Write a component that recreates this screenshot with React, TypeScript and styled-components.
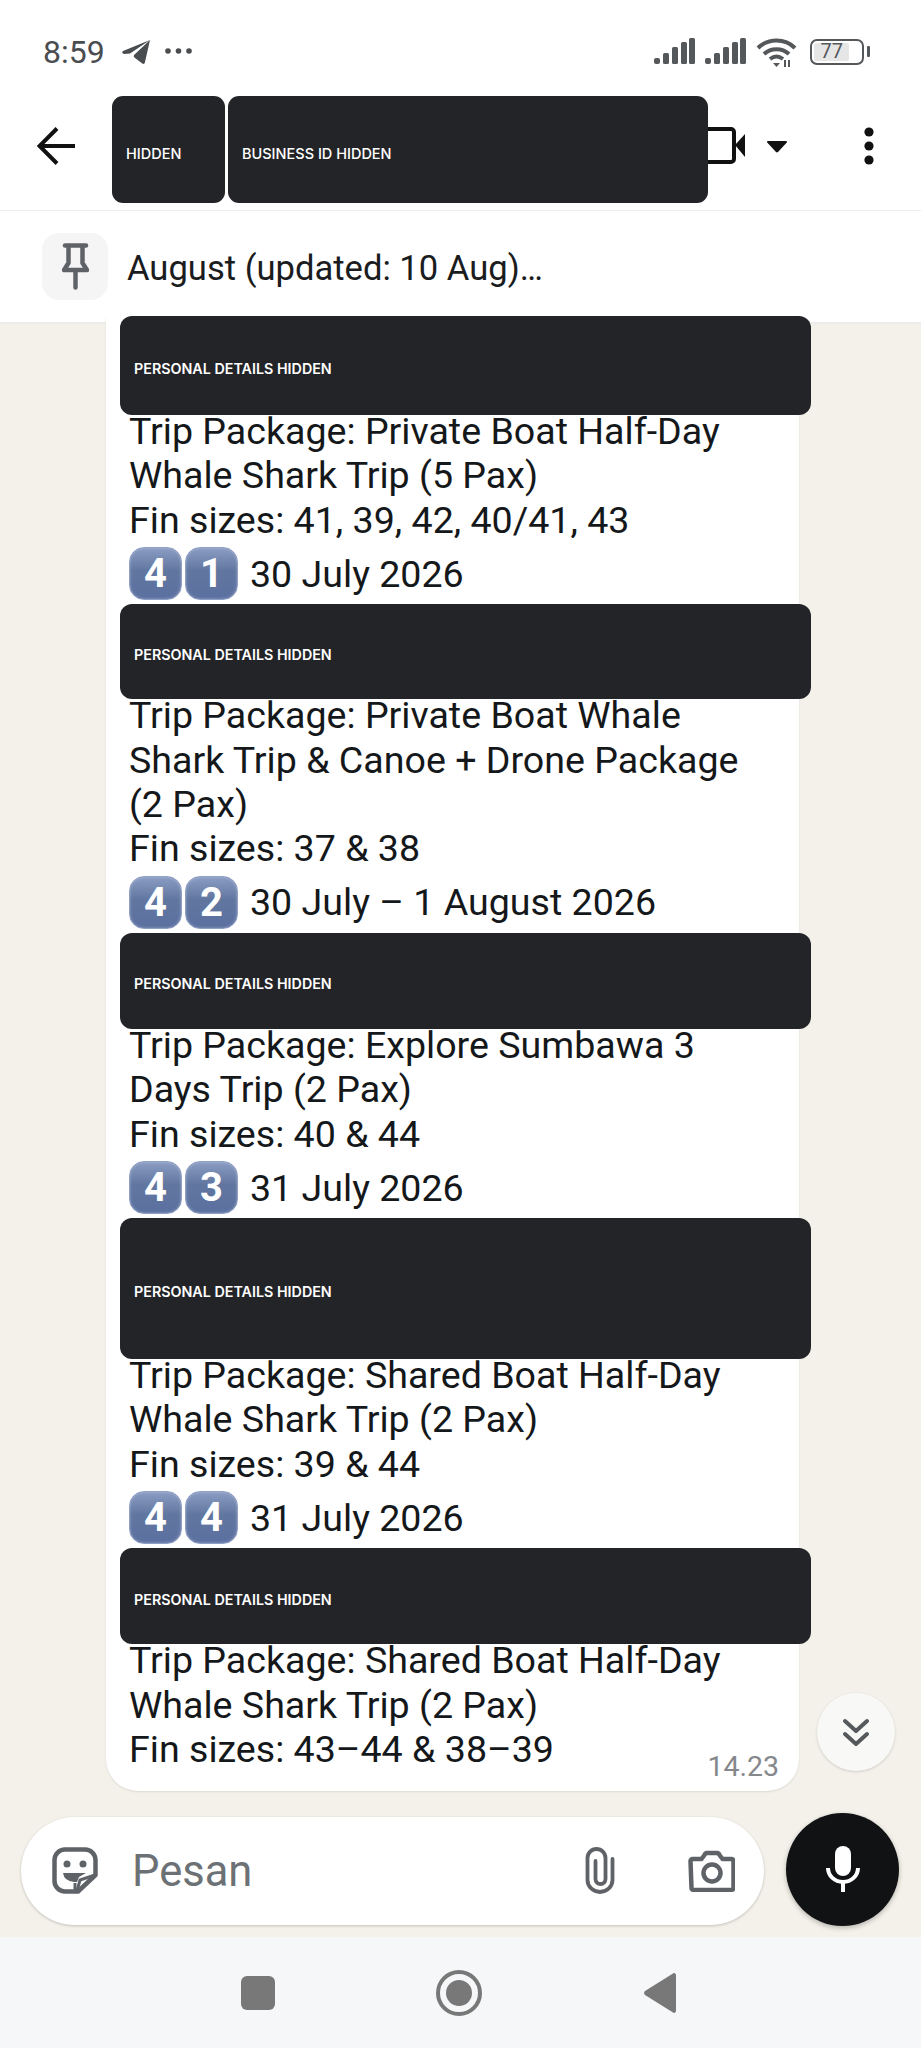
import React from "react";
import styled, { createGlobalStyle } from "styled-components";

const GlobalStyle = createGlobalStyle`
	html, body {
		margin: 0;
		padding: 0;
		background: #fff;
		font-family: Roboto, "Liberation Sans", sans-serif;
	}
	* {
		box-sizing: border-box;
	}
`;

const Phone = styled.div`
	width: 921px;
	height: 2048px;
	display: flex;
	flex-direction: column;
	overflow: hidden;
	background: #fff;
`;

const StatusBar = styled.div`
	height: 96px;
	flex: none;
	display: flex;
	align-items: flex-start;
	padding: 38px 57px 0 43px;
`;

const Clock = styled.span`
	font-size: 32px;
	line-height: 29px;
	color: #4a4d50;
`;

const StatusLeft = styled.div`
	display: flex;
	align-items: flex-start;
	gap: 15px;
	margin-right: auto;
`;

const StatusRight = styled.div`
	display: flex;
	align-items: flex-start;
	gap: 10px;
`;

const Battery = styled.div`
	width: 54px;
	height: 26px;
	margin-top: 1px;
	margin-left: 2px;
	border: 2.5px solid #55585b;
	border-radius: 7px;
	padding: 2px;
	position: relative;
	display: flex;
`;

const BatteryFill = styled.div`
	width: 77%;
	background: #e6e6e6;
	border-radius: 2px;
	color: #55585b;
	font-size: 20px;
	line-height: 17px;
	text-align: center;
`;

const BatteryNub = styled.div`
	position: absolute;
	right: -8px;
	top: 5px;
	width: 3px;
	height: 11px;
	background: #55585b;
	border-radius: 1px;
`;

const Header = styled.header`
	height: 115px;
	flex: none;
	display: flex;
	align-items: flex-start;
	padding-left: 37px;
	border-bottom: 1px solid #ededed;
`;

const HeaderIcon = styled.div<{ $left?: number; $top: number }>`
	margin-left: ${(p) => p.$left ?? 0}px;
	margin-top: ${(p) => p.$top}px;
	line-height: 0;
`;

const HiddenBox = styled.div<{ $width: number; $left: number }>`
	width: ${(p) => p.$width}px;
	height: 107px;
	margin-left: ${(p) => p.$left}px;
	padding: 7px 0 0 14px;
	display: flex;
	align-items: center;
	background: #232428;
	border-radius: 11px;
	color: #fff;
	font-family: Inter, sans-serif;
	font-size: 14.5px;
	font-weight: 500;
`;

const PinBar = styled.div`
	height: 113px;
	flex: none;
	display: flex;
	align-items: center;
	padding-left: 42px;
	border-bottom: 2px solid #ececea;
`;

const PinTile = styled.div`
	width: 66px;
	height: 67px;
	border-radius: 17px;
	background: #f5f5f5;
	display: flex;
	align-items: center;
	justify-content: center;
`;

const PinText = styled.span`
	margin-left: 19px;
	padding-top: 2px;
	font-size: 34.6px;
	color: #1a1c1e;
`;

const Main = styled.main`
	flex: 1;
	min-height: 0;
	position: relative;
	display: flex;
	flex-direction: column;
	background: #f4f1ea;
`;

const Bubble = styled.section`
	width: 693px;
	margin: -8px 0 0 106px;
	padding-bottom: 19px;
	background: #fff;
	border-radius: 0 0 32px 32px;
	box-shadow: 0 1px 2px rgba(0, 0, 0, 0.1);
	position: relative;
	z-index: 1;
`;

const DetailsBox = styled.div<{ $height: number }>`
	width: 691px;
	height: ${(p) => p.$height}px;
	margin-left: 14px;
	padding: 6px 0 0 14px;
	display: flex;
	align-items: center;
	position: relative;
	z-index: 1;
	background: #232428;
	border-radius: 12px;
	color: #fff;
	font-family: Inter, sans-serif;
	font-size: 14.3px;
	font-weight: 600;
`;

const Lines = styled.div`
	margin-top: -6px;
	padding-left: 23px;
	font-size: 37.6px;
	line-height: 44.4px;
	color: #15181a;
`;

const DateRow = styled.div`
	height: 62px;
	padding-top: 1px;
	display: flex;
	align-items: center;
	padding-left: 23px;
	font-size: 37.6px;
	color: #15181a;
`;

const Keycap = styled.span`
	width: 53px;
	height: 53px;
	margin-right: 3px;
	display: flex;
	align-items: center;
	justify-content: center;
	border-radius: 15px;
	border: 1px solid #8fa0c6;
	background: linear-gradient(180deg, #8a9cc3 0%, #61769f 45%, #5b70a0 100%);
	box-shadow: inset 0 0 3px rgba(255, 255, 255, 0.35);
	color: #fff;
	font-size: 40px;
	font-weight: 700;
`;

const DateText = styled.span`
	margin-left: 9px;
`;

const Stamp = styled.span`
	position: absolute;
	right: 20px;
	bottom: 8px;
	font-size: 28.5px;
	color: #85888b;
`;

const ScrollButton = styled.div`
	position: absolute;
	left: 817px;
	top: 1369px;
	width: 78px;
	height: 78px;
	border-radius: 50%;
	background: #f8f8f7;
	box-shadow: 0 1px 3px rgba(0, 0, 0, 0.15);
	display: flex;
	align-items: center;
	justify-content: center;
`;

const Composer = styled.div`
	display: flex;
	align-items: flex-start;
	margin-top: 22px;
	padding-left: 21px;
`;

const InputPill = styled.div`
	width: 743px;
	height: 108px;
	margin-top: 4px;
	padding: 0 29px 0 31px;
	display: flex;
	align-items: center;
	background: #fff;
	border-radius: 54px;
	box-shadow: 0 1px 3px rgba(0, 0, 0, 0.2);
`;

const Placeholder = styled.span`
	margin-left: 34px;
	margin-right: auto;
	padding-top: 2px;
	font-size: 43.5px;
	color: #6c7175;
`;

const MicButton = styled.div`
	width: 113px;
	height: 113px;
	margin-left: 22px;
	border-radius: 50%;
	background: #111214;
	box-shadow: 0 2px 5px rgba(0, 0, 0, 0.25);
	display: flex;
	align-items: center;
	justify-content: center;
`;

const NavBar = styled.nav`
	height: 111px;
	flex: none;
	padding-left: 241px;
	display: flex;
	align-items: center;
	background: #f6f7f8;
`;

const NavSquare = styled.div`
	width: 34px;
	height: 34px;
	border-radius: 6px;
	background: #787878;
`;

const NavHome = styled.div`
	width: 46px;
	height: 46px;
	margin-left: 161px;
	border: 4px solid #787878;
	border-radius: 50%;
	display: flex;
	align-items: center;
	justify-content: center;

	&::after {
		content: "";
		width: 26px;
		height: 26px;
		border-radius: 50%;
		background: #787878;
	}
`;

const NavBack = styled.div`
	margin-left: 162px;
	line-height: 0;
`;

const SignalIcon = () => (
	<svg width="41" height="26" viewBox="0 0 41 26" fill="#55585b">
		<rect x="0" y="20" width="6" height="6" rx="2" />
		<rect x="9" y="15" width="6" height="11" rx="1.5" />
		<rect x="18" y="9" width="6" height="17" rx="1.5" />
		<rect x="27" y="4" width="6" height="22" rx="1.5" />
		<rect x="35" y="0" width="6" height="26" rx="1.5" />
	</svg>
);

const messages = [
	{
		height: 99,
		lines: ["Trip Package: Private Boat Half-Day", "Whale Shark Trip (5 Pax)", "Fin sizes: 41, 39, 42, 40/41, 43"],
		caps: "41",
		date: "30 July 2026",
	},
	{
		height: 95,
		lines: ["Trip Package: Private Boat Whale", "Shark Trip & Canoe + Drone Package", "(2 Pax)", "Fin sizes: 37 & 38"],
		caps: "42",
		date: "30 July – 1 August 2026",
	},
	{
		height: 96,
		lines: ["Trip Package: Explore Sumbawa 3", "Days Trip (2 Pax)", "Fin sizes: 40 & 44"],
		caps: "43",
		date: "31 July 2026",
	},
	{
		height: 141,
		lines: ["Trip Package: Shared Boat Half-Day", "Whale Shark Trip (2 Pax)", "Fin sizes: 39 & 44"],
		caps: "44",
		date: "31 July 2026",
	},
	{
		height: 96,
		lines: ["Trip Package: Shared Boat Half-Day", "Whale Shark Trip (2 Pax)", "Fin sizes: 43–44 & 38–39"],
	},
];

const App: React.FC = () => {
	return (
		<Phone>
			<GlobalStyle />
			<StatusBar>
				<StatusLeft>
					<Clock>8:59</Clock>
					<svg width="28" height="24" viewBox="0 0 28 24" fill="#4a4d50" style={{ marginTop: 2, marginLeft: 2 }}>
						<path d="M28 0 1 11Q-1 13 2 14L8 13.500z" />
						<path d="M28 0 12 15Q11 17 13 18L21 24Q23 24 23 22z" />
					</svg>
					<svg width="27" height="6" viewBox="0 0 27 6" fill="#4a4d50" style={{ marginTop: 10 }}>
						<circle cx="3" cy="3" r="2.800" />
						<circle cx="13.500" cy="3" r="2.800" />
						<circle cx="24" cy="3" r="2.800" />
					</svg>
				</StatusLeft>
				<StatusRight>
					<SignalIcon />
					<SignalIcon />
					<svg width="42" height="30" viewBox="0 0 42 30" fill="none" stroke="#55585b" strokeWidth="4">
						<path d="M2 10C12 0 29 0 39 10" />
						<path d="M8 16c7-6.500 18-6.500 25 0" />
						<path d="M14 21c4-3 9-3 13 0" />
						<path d="M17 25h7l-3.500 4z" fill="#55585b" stroke="none" />
						<path d="M29 29v-7M33 22v7" strokeWidth="2" />
					</svg>
					<Battery>
						<BatteryFill>77</BatteryFill>
						<BatteryNub />
					</Battery>
				</StatusRight>
			</StatusBar>

			<Header>
				<HeaderIcon $top={31}>
					<svg width="38" height="38" viewBox="0 0 38 38" fill="none" stroke="#111" strokeWidth="4">
						<path d="M38 19H3M20 1.500 2.500 19 20 36.500" />
					</svg>
				</HeaderIcon>
				<HiddenBox $width={113} $left={37}>HIDDEN</HiddenBox>
				<HiddenBox $width={480} $left={3}>BUSINESS ID HIDDEN</HiddenBox>
				<HeaderIcon $top={31}>
					<svg width="37" height="37" viewBox="0 0 37 37">
						<path d="M0 2h23a3 3 0 0 1 3 3v27a3 3 0 0 1-3 3H0" fill="none" stroke="#111" strokeWidth="4" />
						<path d="M27 18 37 7v23z" fill="#111" />
					</svg>
				</HeaderIcon>
				<HeaderIcon $left={22} $top={45}>
					<svg width="20" height="12" viewBox="0 0 20 12" fill="#111">
						<path d="M1 0h18a1 1 0 0 1 .8 1.600L11 11a1.500 1.500 0 0 1-2 0L.2 1.600A1 1 0 0 1 1 0z" />
					</svg>
				</HeaderIcon>
				<HeaderIcon $left={77} $top={31}>
					<svg width="10" height="38" viewBox="0 0 10 38" fill="#111">
						<circle cx="5" cy="5" r="4.600" />
						<circle cx="5" cy="19" r="4.600" />
						<circle cx="5" cy="33" r="4.600" />
					</svg>
				</HeaderIcon>
			</Header>

			<PinBar>
				<PinTile>
					<svg width="27" height="47" viewBox="0 0 27 47" fill="none" stroke="#5f6368" strokeWidth="4.500" strokeLinecap="round" strokeLinejoin="round">
						<path d="M3 2.500h21" />
						<path d="M6.500 3v17l-4.500 7h23l-4.500-7V3" />
						<path d="M13.500 28v16.500" />
					</svg>
				</PinTile>
				<PinText>August (updated: 10 Aug)…</PinText>
			</PinBar>

			<Main>
				<Bubble>
					{messages.map((message) => (
						<React.Fragment key={message.lines[0] + message.height}>
							<DetailsBox $height={message.height}>PERSONAL DETAILS HIDDEN</DetailsBox>
							<Lines>
								{message.lines.map((line) => (
									<div key={line}>{line}</div>
								))}
							</Lines>
							{message.caps && (
								<DateRow>
									{message.caps.split("").map((digit, i) => (
										<Keycap key={i}>{digit}</Keycap>
									))}
									<DateText>{message.date}</DateText>
								</DateRow>
							)}
						</React.Fragment>
					))}
					<Stamp>14.23</Stamp>
				</Bubble>

				<ScrollButton>
					<svg width="26" height="29" viewBox="0 0 26 29" fill="none" stroke="#55595c" strokeWidth="4" strokeLinecap="round" strokeLinejoin="round">
						<path d="M2 3l11 10L24 3" />
						<path d="M2 16l11 10 11-10" />
					</svg>
				</ScrollButton>

				<Composer>
					<InputPill>
						<svg width="46" height="47" viewBox="0 0 46 47" fill="none" stroke="#5f6368" strokeWidth="4.500" strokeLinejoin="round">
							<path d="M13 2.500h20A10.500 10.500 0 0 1 43.500 13v15L26 44.500H13A10.500 10.500 0 0 1 2.500 34V13A10.500 10.500 0 0 1 13 2.500z" />
							<path d="M43 28 28 33 25 44" strokeWidth="3" />
							<path d="M11 26h23l-7 4-2 5h-3q-10-1-11-9z" fill="#5f6368" stroke="none" />
							<path d="M23 36v8" strokeWidth="3" />
							<circle cx="15" cy="17" r="3.500" fill="#5f6368" stroke="none" />
							<circle cx="31" cy="17" r="3.500" fill="#5f6368" stroke="none" />
						</svg>
						<Placeholder>Pesan</Placeholder>
						<svg width="31" height="47" viewBox="0 0 31 47" fill="none" stroke="#5f6368" strokeWidth="3.800" strokeLinecap="round">
							<path d="M11.500 14v18a5 5 0 0 0 10 0V11a9 9 0 0 0-18 0v22a12.500 12 0 0 0 25 0V12" />
						</svg>
						<svg width="47" height="42" viewBox="0 0 47 42" fill="none" stroke="#5f6368" strokeWidth="4.500" strokeLinejoin="round" style={{ marginLeft: 73 }}>
							<path d="M2.500 11a2 2 0 0 1 2-2h9l3-4a3 3 0 0 1 2-2h11a3 3 0 0 1 2 2l3 4h9a2 2 0 0 1 2 2v27a2 2 0 0 1-2 2h-38a2 2 0 0 1-2-2z" />
							<circle cx="24" cy="23" r="8.500" />
						</svg>
					</InputPill>
					<MicButton>
						<svg width="34" height="46" viewBox="0 0 34 46" fill="none" stroke="#fff">
							<rect x="9" y="0" width="16" height="30" rx="8" fill="#fff" stroke="none" />
							<path d="M2 22a15 14 0 0 0 30 0" strokeWidth="4" />
							<path d="M17 35v11" strokeWidth="4" />
						</svg>
					</MicButton>
				</Composer>
			</Main>

			<NavBar>
				<NavSquare />
				<NavHome />
				<NavBack>
					<svg width="32" height="40" viewBox="0 0 32 40" fill="#787878">
						<path d="M29 .500c1.500-1 3 0 3 2v35c0 2-1.500 3-3 2L1 22c-1.300-1-1.300-3 0-4z" />
					</svg>
				</NavBack>
			</NavBar>
		</Phone>
	);
};

export default App;
